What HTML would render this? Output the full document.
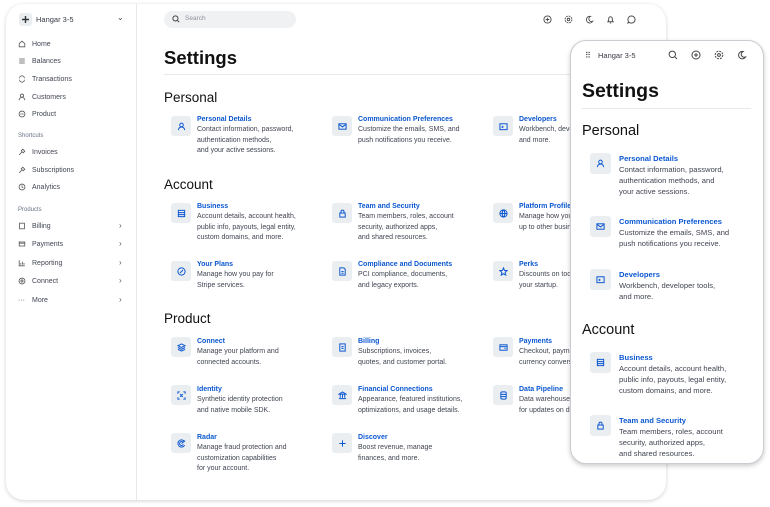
<!DOCTYPE html>
<html><head><meta charset="utf-8"><style>
*{margin:0;padding:0;box-sizing:border-box}
body{width:770px;height:507px;background:#fff;font-family:"Liberation Sans",sans-serif;position:relative;overflow:hidden;color:#353a44}
.abs{position:absolute}
#desk{position:absolute;left:6px;top:4px;width:660px;height:496px;border-radius:18px;background:#fff;box-shadow:0 1px 4px rgba(0,0,0,.18);overflow:hidden}
#side{position:absolute;left:0;top:0;width:131px;height:496px;border-right:1px solid #e6e8eb}
.nav{position:absolute;left:12px;font-size:7px;color:#414552;display:flex;align-items:center;height:10px}
.nav svg{width:8px;height:8px;margin-right:6px}
.chev{position:absolute;left:113px;font-size:8px;color:#555}
.lab{position:absolute;left:12px;font-size:6px;color:#687385}
.h1{position:absolute;font-weight:bold;color:#1a1b25}
.h2{position:absolute;color:#111;font-weight:normal}
.it{position:absolute;font-size:7px;line-height:10.3px;color:#414552}
.it b{color:#0b57d0;font-weight:bold;display:block}
.ib{position:absolute;width:20px;height:20px;background:#ebeef1;border-radius:3px;display:flex;align-items:center;justify-content:center}
.ib svg{width:9px;height:9px}
.pit{position:absolute;font-size:7.6px;line-height:11px;color:#414552}
.pit b{color:#0b57d0;font-weight:bold;display:block}
.pib{position:absolute;width:21px;height:21px;background:#ebeef1;border-radius:3px;display:flex;align-items:center;justify-content:center}
.pib svg{width:9px;height:9px}
#phone{position:absolute;left:570px;top:40px;width:194px;height:424px;border-radius:16px;background:#fff;border:1px solid #c9ccd1;box-shadow:0 2px 5px rgba(0,0,0,.2);overflow:hidden}
.ti svg{position:absolute;width:9px;height:9px}
</style></head><body>
<div id="desk">
 <div id="side">
  <div class="abs" style="left:13px;top:9px;width:13px;height:13px;background:#ebeef1;border-radius:3px"><svg viewBox="0 0 13 13" width="13" height="13" stroke="#333" stroke-width="1.4"><path d="M6.5 3V10M3 6.5H10"/></svg></div>
  <div class="abs" style="left:30px;top:11px;font-size:7.5px;color:#353a44">Hangar 3-5</div>
  <div class="abs" style="left:111px;top:9px;font-size:8px;color:#444">⌄</div>
  <div class="nav" style="top:35px"><svg viewBox="0 0 10 10" fill="none" stroke="#555" stroke-width="1"><path d="M1.5 4.5L5 1.5 8.5 4.5V8.5H1.5Z"/></svg>Home</div>
  <div class="nav" style="top:52px"><svg viewBox="0 0 10 10" stroke="#555" stroke-width="1"><path d="M1.5 2.5H8.5M1.5 5H8.5M1.5 7.5H8.5"/></svg>Balances</div>
  <div class="nav" style="top:70px"><svg viewBox="0 0 10 10" fill="none" stroke="#555" stroke-width="1"><path d="M2 4A3 3 0 0 1 8 4M8 6A3 3 0 0 1 2 6"/></svg>Transactions</div>
  <div class="nav" style="top:88px"><svg viewBox="0 0 10 10" fill="none" stroke="#555" stroke-width="1"><circle cx="5" cy="3.3" r="2"/><path d="M1.5 9A3.5 3.5 0 0 1 8.5 9"/></svg>Customers</div>
  <div class="nav" style="top:105px"><svg viewBox="0 0 10 10" fill="none" stroke="#555" stroke-width="1"><circle cx="5" cy="5" r="3.7"/><path d="M3 5H7"/></svg>Product</div>
  <div class="lab" style="top:129px">Shortcuts</div>
  <div class="nav" style="top:143px"><svg viewBox="0 0 10 10" fill="none" stroke="#555" stroke-width="1"><path d="M6 1.5L8.5 4 6.5 6 4 3.5ZM5 5L1.5 8.5"/></svg>Invoices</div>
  <div class="nav" style="top:161px"><svg viewBox="0 0 10 10" fill="none" stroke="#555" stroke-width="1"><path d="M6 1.5L8.5 4 6.5 6 4 3.5ZM5 5L1.5 8.5"/></svg>Subscriptions</div>
  <div class="nav" style="top:178px"><svg viewBox="0 0 10 10" fill="none" stroke="#555" stroke-width="1"><circle cx="5" cy="5" r="3.7"/><path d="M5 3V5.3L6.5 6"/></svg>Analytics</div>
  <div class="lab" style="top:203px">Products</div>
  <div class="nav" style="top:217px"><svg viewBox="0 0 10 10" fill="none" stroke="#555" stroke-width="1"><rect x="2" y="1.5" width="6" height="7"/></svg>Billing</div><div class="chev" style="top:217px">›</div>
  <div class="nav" style="top:235px"><svg viewBox="0 0 10 10" fill="none" stroke="#555" stroke-width="1"><rect x="1.5" y="2.5" width="7" height="5"/><path d="M1.5 4H8.5"/></svg>Payments</div><div class="chev" style="top:235px">›</div>
  <div class="nav" style="top:254px"><svg viewBox="0 0 10 10" fill="none" stroke="#555" stroke-width="1"><path d="M1.5 1.5V8.5H8.5M3.5 7V5M5.5 7V3.5M7.5 7V5"/></svg>Reporting</div><div class="chev" style="top:254px">›</div>
  <div class="nav" style="top:272px"><svg viewBox="0 0 10 10" fill="none" stroke="#555" stroke-width="1"><circle cx="5" cy="5" r="3.7"/><circle cx="5" cy="5" r="1.3"/></svg>Connect</div><div class="chev" style="top:272px">›</div>
  <div class="nav" style="top:291px"><span style="margin-right:6px;width:8px">···</span>More</div><div class="chev" style="top:291px">›</div>
 </div>
 <div class="abs" style="left:158px;top:7px;width:132px;height:17px;border-radius:9px;background:#f0f1f3"></div>
 <svg class="abs" style="left:166px;top:11px" width="8" height="8" viewBox="0 0 10 10" fill="none" stroke="#444" stroke-width="1.2"><circle cx="4.3" cy="4.3" r="3.2"/><path d="M6.7 6.7L9 9"/></svg>
 <div class="abs" style="left:179px;top:11px;font-size:6.5px;color:#8a8f98">Search</div>
 <div class="ti">
  <svg style="left:537px;top:11px" viewBox="0 0 10 10" fill="none" stroke="#444" stroke-width="1"><circle cx="5" cy="5" r="4"/><path d="M5 3V7M3 5H7"/></svg>
  <svg style="left:558px;top:11px" viewBox="0 0 10 10" fill="none" stroke="#444" stroke-width="1"><circle cx="5" cy="5" r="3.8" stroke-dasharray="2 1"/><circle cx="5" cy="5" r="1.4"/></svg>
  <svg style="left:579px;top:11px" viewBox="0 0 10 10" fill="none" stroke="#444" stroke-width="1"><path d="M6 1.5A3.7 3.7 0 1 0 8.5 7 3 3 0 0 1 6 1.5Z"/></svg>
  <svg style="left:600px;top:11px" viewBox="0 0 10 10" fill="none" stroke="#444" stroke-width="1"><path d="M2 7.5H8L7 6V4A2 2 0 0 0 3 4V6ZM4.3 9H5.7"/></svg>
  <svg style="left:621px;top:11px" viewBox="0 0 10 10" fill="none" stroke="#444" stroke-width="1"><path d="M5 1A4 4 0 1 1 2.5 8.2L1 9 1.6 7A4 4 0 0 1 5 1Z"/></svg>
 </div>
 <div class="h1" style="left:158px;top:43px;font-size:18.5px;color:#111">Settings</div>
 <div class="abs" style="left:158px;top:70px;width:502px;height:1px;background:#e6e8eb"></div>
 <div class="h2" style="left:158px;top:86px;font-size:13.5px">Personal</div>
 <div class="h2" style="left:158px;top:173px;font-size:13.5px">Account</div>
 <div class="h2" style="left:158px;top:307px;font-size:13.5px">Product</div>
</div>
<div class="ib" style="left:171px;top:116px"><svg viewBox="0 0 10 10" fill="none" stroke="#0b57d0" stroke-width="1.1"><circle cx="5" cy="3.3" r="2"/><path d="M1.5 9A3.5 3.5 0 0 1 8.5 9"/></svg></div>
<div class="it" style="left:197px;top:115px"><b>Personal Details</b>Contact information, password,<br>authentication methods,<br>and your active sessions.</div>
<div class="ib" style="left:332px;top:116px"><svg viewBox="0 0 10 10" fill="none" stroke="#0b57d0" stroke-width="1.1"><rect x="1" y="2" width="8" height="6"/><path d="M1 2.5L5 5.5 9 2.5"/></svg></div>
<div class="it" style="left:358px;top:115px"><b>Communication Preferences</b>Customize the emails, SMS, and<br>push notifications you receive.</div>
<div class="ib" style="left:493px;top:116px"><svg viewBox="0 0 10 10" fill="none" stroke="#0b57d0" stroke-width="1.1"><rect x="1" y="2" width="8" height="6.5"/><path d="M3 4.5L4.5 5.5 3 6.5"/></svg></div>
<div class="it" style="left:519px;top:115px"><b>Developers</b>Workbench, developer tools,<br>and more.</div>

<div class="ib" style="left:171px;top:203px"><svg viewBox="0 0 10 10" fill="none" stroke="#0b57d0" stroke-width="1.1"><rect x="1.5" y="1.5" width="7" height="7"/><path d="M1.5 4H8.5M1.5 6.2H8.5"/></svg></div>
<div class="it" style="left:197px;top:202px"><b>Business</b>Account details, account health,<br>public info, payouts, legal entity,<br>custom domains, and more.</div>
<div class="ib" style="left:332px;top:203px"><svg viewBox="0 0 10 10" fill="none" stroke="#0b57d0" stroke-width="1.1"><rect x="2" y="4.5" width="6" height="4.5"/><path d="M3.3 4.5V3A1.7 1.7 0 0 1 6.7 3V4.5"/></svg></div>
<div class="it" style="left:358px;top:202px"><b>Team and Security</b>Team members, roles, account<br>security, authorized apps,<br>and shared resources.</div>
<div class="ib" style="left:493px;top:203px"><svg viewBox="0 0 10 10" fill="none" stroke="#0b57d0" stroke-width="1.1"><circle cx="5" cy="5" r="4"/><path d="M1 5H9M5 1C3 3 3 7 5 9M5 1C7 3 7 7 5 9"/></svg></div>
<div class="it" style="left:519px;top:202px"><b>Platform Profile</b>Manage how you show<br>up to other businesses.</div>

<div class="ib" style="left:171px;top:261px"><svg viewBox="0 0 10 10" fill="none" stroke="#0b57d0" stroke-width="1.1"><circle cx="5" cy="5" r="4"/><path d="M3.3 6.7L6.7 3.3"/></svg></div>
<div class="it" style="left:197px;top:260px"><b>Your Plans</b>Manage how you pay for<br>Stripe services.</div>
<div class="ib" style="left:332px;top:261px"><svg viewBox="0 0 10 10" fill="none" stroke="#0b57d0" stroke-width="1.1"><path d="M2 1H6.5L8 2.5V9H2Z M3.8 5H6.2M3.8 7H6.2"/></svg></div>
<div class="it" style="left:358px;top:260px"><b>Compliance and Documents</b>PCI compliance, documents,<br>and legacy exports.</div>
<div class="ib" style="left:493px;top:261px"><svg viewBox="0 0 10 10" fill="none" stroke="#0b57d0" stroke-width="1.1"><path d="M5 1L6.2 3.8 9 4 6.8 6 7.5 9 5 7.4 2.5 9 3.2 6 1 4 3.8 3.8Z"/></svg></div>
<div class="it" style="left:519px;top:260px"><b>Perks</b>Discounts on tools for<br>your startup.</div>

<div class="ib" style="left:171px;top:337px"><svg viewBox="0 0 10 10" fill="none" stroke="#0b57d0" stroke-width="1.1"><path d="M5 1L9 3 5 5 1 3ZM1 5L5 7 9 5M1 7L5 9 9 7"/></svg></div>
<div class="it" style="left:197px;top:337px"><b>Connect</b>Manage your platform and<br>connected accounts.</div>
<div class="ib" style="left:332px;top:337px"><svg viewBox="0 0 10 10" fill="none" stroke="#0b57d0" stroke-width="1.1"><rect x="2" y="1" width="6" height="8"/><path d="M3.8 4H6.2M3.8 6H6.2"/></svg></div>
<div class="it" style="left:358px;top:337px"><b>Billing</b>Subscriptions, invoices,<br>quotes, and customer portal.</div>
<div class="ib" style="left:493px;top:337px"><svg viewBox="0 0 10 10" fill="none" stroke="#0b57d0" stroke-width="1.1"><rect x="1" y="2" width="8" height="6"/><path d="M1 4H9M6 6H7.5"/></svg></div>
<div class="it" style="left:519px;top:337px"><b>Payments</b>Checkout, payment methods,<br>currency conversion.</div>

<div class="ib" style="left:171px;top:385px"><svg viewBox="0 0 10 10" fill="none" stroke="#0b57d0" stroke-width="1.1"><path d="M1 3V1H3M7 1H9V3M9 7V9H7M3 9H1V7M3.5 3.5L6.5 6.5M6.5 3.5L3.5 6.5"/></svg></div>
<div class="it" style="left:197px;top:385px"><b>Identity</b>Synthetic identity protection<br>and native mobile SDK.</div>
<div class="ib" style="left:332px;top:385px"><svg viewBox="0 0 10 10" fill="none" stroke="#0b57d0" stroke-width="1.1"><path d="M1 3.5L5 1 9 3.5ZM2.5 4V7.5M5 4V7.5M7.5 4V7.5M1 8.5H9"/></svg></div>
<div class="it" style="left:358px;top:385px"><b>Financial Connections</b>Appearance, featured institutions,<br>optimizations, and usage details.</div>
<div class="ib" style="left:493px;top:385px"><svg viewBox="0 0 10 10" fill="none" stroke="#0b57d0" stroke-width="1.1"><rect x="2" y="1" width="6" height="8" rx="1.5"/><path d="M2 3.7H8M2 6.3H8"/></svg></div>
<div class="it" style="left:519px;top:385px"><b>Data Pipeline</b>Data warehouse sync<br>for updates on data.</div>

<div class="ib" style="left:171px;top:433px"><svg viewBox="0 0 10 10" fill="none" stroke="#0b57d0" stroke-width="1.1"><path d="M8.5 3A4 4 0 1 0 8.5 7M7 4A2.2 2.2 0 1 0 7 6M5 5L9 2"/></svg></div>
<div class="it" style="left:197px;top:433px"><b>Radar</b>Manage fraud protection and<br>customization capabilities<br>for your account.</div>
<div class="ib" style="left:332px;top:433px"><svg viewBox="0 0 10 10" fill="none" stroke="#0b57d0" stroke-width="1.1"><path d="M5 1.5V8.5M1.5 5H8.5"/></svg></div>
<div class="it" style="left:358px;top:433px"><b>Discover</b>Boost revenue, manage<br>finances, and more.</div>

<div id="phone">
 <div class="abs" style="left:14px;top:10px;font-size:8px;color:#333;letter-spacing:-1px">⠿</div>
 <div class="abs" style="left:27px;top:10px;font-size:7.5px;color:#353a44">Hangar 3-5</div>
 <div class="ti">
  <svg style="left:97px;top:9px;width:10px;height:10px" viewBox="0 0 10 10" fill="none" stroke="#444" stroke-width="1"><circle cx="4.3" cy="4.3" r="3.2"/><path d="M6.7 6.7L9 9"/></svg>
  <svg style="left:120px;top:9px;width:10px;height:10px" viewBox="0 0 10 10" fill="none" stroke="#444" stroke-width="1"><circle cx="5" cy="5" r="4"/><path d="M5 3V7M3 5H7"/></svg>
  <svg style="left:143px;top:9px;width:10px;height:10px" viewBox="0 0 10 10" fill="none" stroke="#444" stroke-width="1"><circle cx="5" cy="5" r="3.8" stroke-dasharray="2 1"/><circle cx="5" cy="5" r="1.4"/></svg>
  <svg style="left:166px;top:9px;width:10px;height:10px" viewBox="0 0 10 10" fill="none" stroke="#444" stroke-width="1"><path d="M6 1.5A3.7 3.7 0 1 0 8.5 7 3 3 0 0 1 6 1.5Z"/></svg>
 </div>
 <div class="h1" style="left:11px;top:39px;font-size:19.5px;color:#111">Settings</div>
 <div class="abs" style="left:11px;top:67px;width:169px;height:1px;background:#e6e8eb"></div>
 <div class="h2" style="left:11px;top:82px;font-size:14.5px">Personal</div>
 <div class="pib" style="left:19px;top:112px"><svg viewBox="0 0 10 10" fill="none" stroke="#0b57d0" stroke-width="1.1"><circle cx="5" cy="3.3" r="2"/><path d="M1.5 9A3.5 3.5 0 0 1 8.5 9"/></svg></div>
 <div class="pit" style="left:48px;top:112px"><b>Personal Details</b>Contact information, password,<br>authentication methods, and<br>your active sessions.</div>
 <div class="pib" style="left:19px;top:175px"><svg viewBox="0 0 10 10" fill="none" stroke="#0b57d0" stroke-width="1.1"><rect x="1" y="2" width="8" height="6"/><path d="M1 2.5L5 5.5 9 2.5"/></svg></div>
 <div class="pit" style="left:48px;top:175px"><b>Communication Preferences</b>Customize the emails, SMS, and<br>push notifications you receive.</div>
 <div class="pib" style="left:19px;top:228px"><svg viewBox="0 0 10 10" fill="none" stroke="#0b57d0" stroke-width="1.1"><rect x="1" y="2" width="8" height="6.5"/><path d="M3 4.5L4.5 5.5 3 6.5"/></svg></div>
 <div class="pit" style="left:48px;top:228px"><b>Developers</b>Workbench, developer tools,<br>and more.</div>
 <div class="h2" style="left:11px;top:281px;font-size:14.5px">Account</div>
 <div class="pib" style="left:19px;top:311px"><svg viewBox="0 0 10 10" fill="none" stroke="#0b57d0" stroke-width="1.1"><rect x="1.5" y="1.5" width="7" height="7"/><path d="M1.5 4H8.5M1.5 6.2H8.5"/></svg></div>
 <div class="pit" style="left:48px;top:311px"><b>Business</b>Account details, account health,<br>public info, payouts, legal entity,<br>custom domains, and more.</div>
 <div class="pib" style="left:19px;top:374px"><svg viewBox="0 0 10 10" fill="none" stroke="#0b57d0" stroke-width="1.1"><rect x="2" y="4.5" width="6" height="4.5"/><path d="M3.3 4.5V3A1.7 1.7 0 0 1 6.7 3V4.5"/></svg></div>
 <div class="pit" style="left:48px;top:374px"><b>Team and Security</b>Team members, roles, account<br>security, authorized apps,<br>and shared resources.</div>
</div>
</body></html>
